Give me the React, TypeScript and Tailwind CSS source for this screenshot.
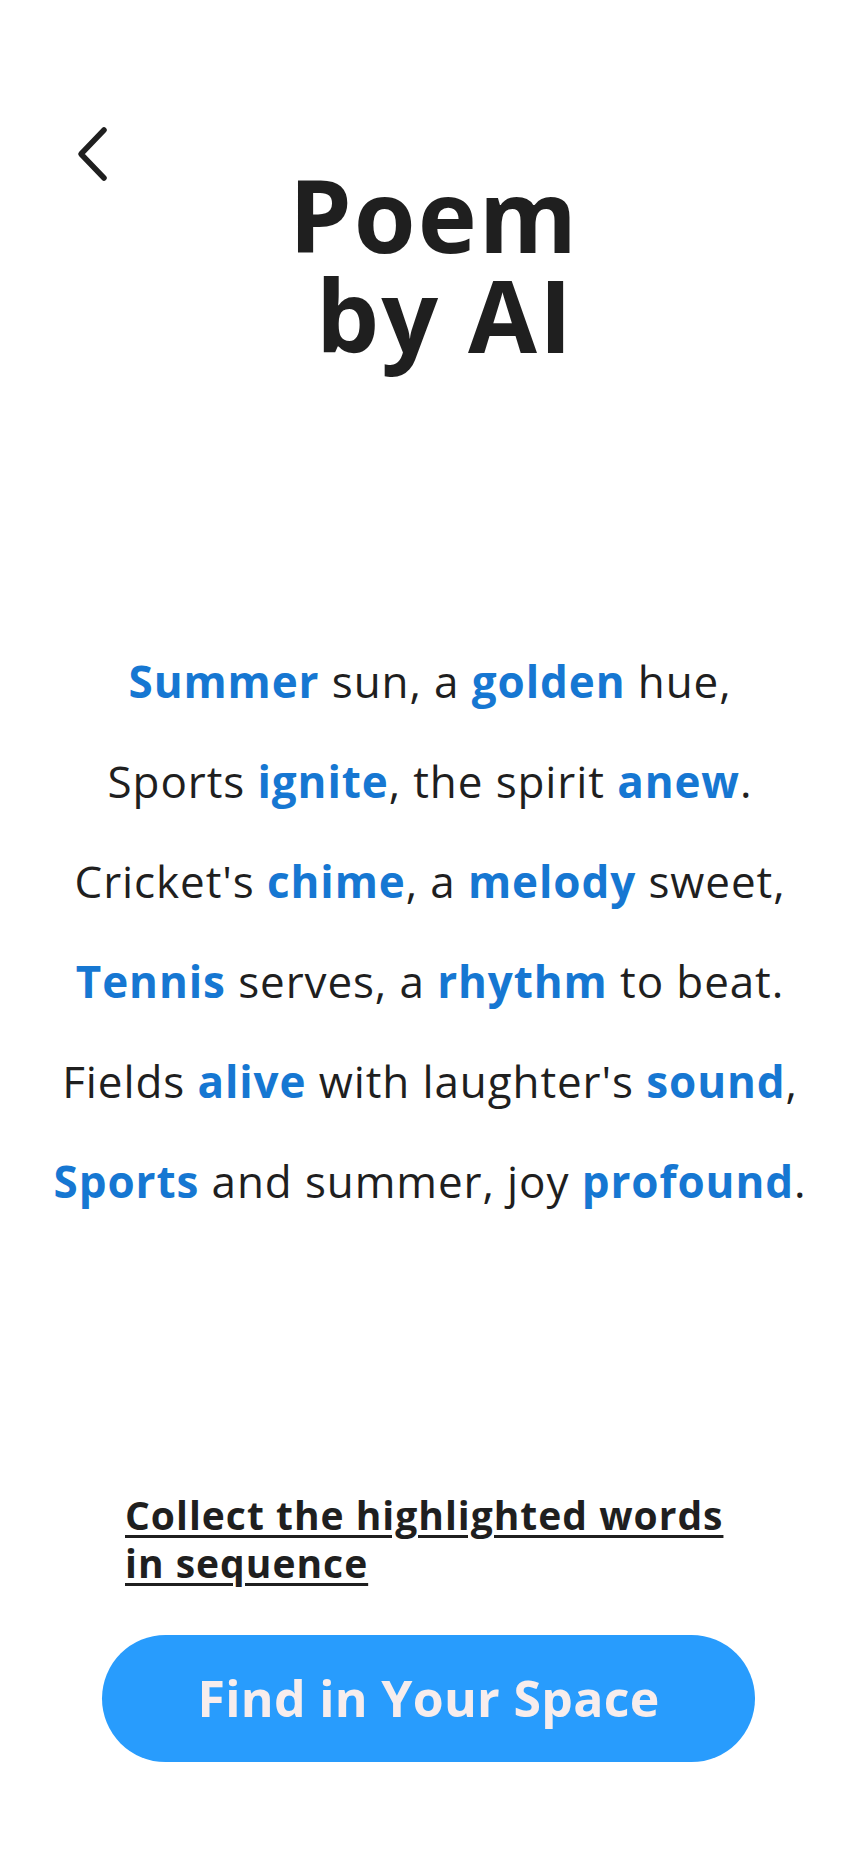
import React from "react";

const lines: { t: string; b: boolean }[][] = [
  [
    { t: "Summer", b: true },
    { t: " sun, a ", b: false },
    { t: "golden", b: true },
    { t: " hue,", b: false },
  ],
  [
    { t: "Sports ", b: false },
    { t: "ignite", b: true },
    { t: ", the spirit ", b: false },
    { t: "anew", b: true },
    { t: ".", b: false },
  ],
  [
    { t: "Cricket's ", b: false },
    { t: "chime", b: true },
    { t: ", a ", b: false },
    { t: "melody", b: true },
    { t: " sweet,", b: false },
  ],
  [
    { t: "Tennis", b: true },
    { t: " serves, a ", b: false },
    { t: "rhythm", b: true },
    { t: " to beat.", b: false },
  ],
  [
    { t: "Fields ", b: false },
    { t: "alive", b: true },
    { t: " with laughter's ", b: false },
    { t: "sound", b: true },
    { t: ",", b: false },
  ],
  [
    { t: "Sports", b: true },
    { t: " and summer, joy ", b: false },
    { t: "profound", b: true },
    { t: ".", b: false },
  ],
];

export default function App() {
  return (
    <div
      className="relative w-[860px] h-[1864px] bg-white text-[#1f1f1f] flex flex-col"
      style={{ fontFamily: '"Open Sans", "Noto Sans", sans-serif' }}
    >
      <button className="absolute left-[73px] top-[122px] w-[40px] h-[64px] flex items-center justify-center">
        <svg width="40" height="64" viewBox="0 0 40 64" fill="none">
          <path
            d="M31 8 L8 32 L31 56"
            stroke="#1f1f1f"
            strokeWidth="5.5"
            strokeLinecap="round"
            strokeLinejoin="round"
          />
        </svg>
      </button>

      <h1 className="mt-[164px] text-center font-bold text-[100px] leading-[100px] tracking-[2px] pl-[8px]">
        <div>Poem</div>
        <div className="pl-[22px]">by AI</div>
      </h1>

      <div className="mt-[267px] flex flex-col items-center text-[44px] leading-[100px] tracking-[0.9px]">
        {lines.map((line, i) => (
          <div key={i} className="whitespace-pre">
            {line.map((s, j) =>
              s.b ? (
                <span key={j} className="font-bold text-[#1677d2]">
                  {s.t}
                </span>
              ) : (
                <span key={j}>{s.t}</span>
              )
            )}
          </div>
        ))}
      </div>

      <div className="mt-[260px] pl-[125px] pr-[60px]">
        <p className="font-bold text-[39px] leading-[48px] tracking-[1px] underline decoration-[3px] underline-offset-[5px]">
          Collect the highlighted words
          <br />
          in sequence
        </p>
      </div>

      <div className="mt-[48px] pl-[102px]">
        <button className="w-[653px] h-[127px] rounded-full bg-[#289cfd] text-[#f7eded] font-bold text-[50px] tracking-[0.3px] flex items-center justify-center">
          Find in Your Space
        </button>
      </div>
    </div>
  );
}
